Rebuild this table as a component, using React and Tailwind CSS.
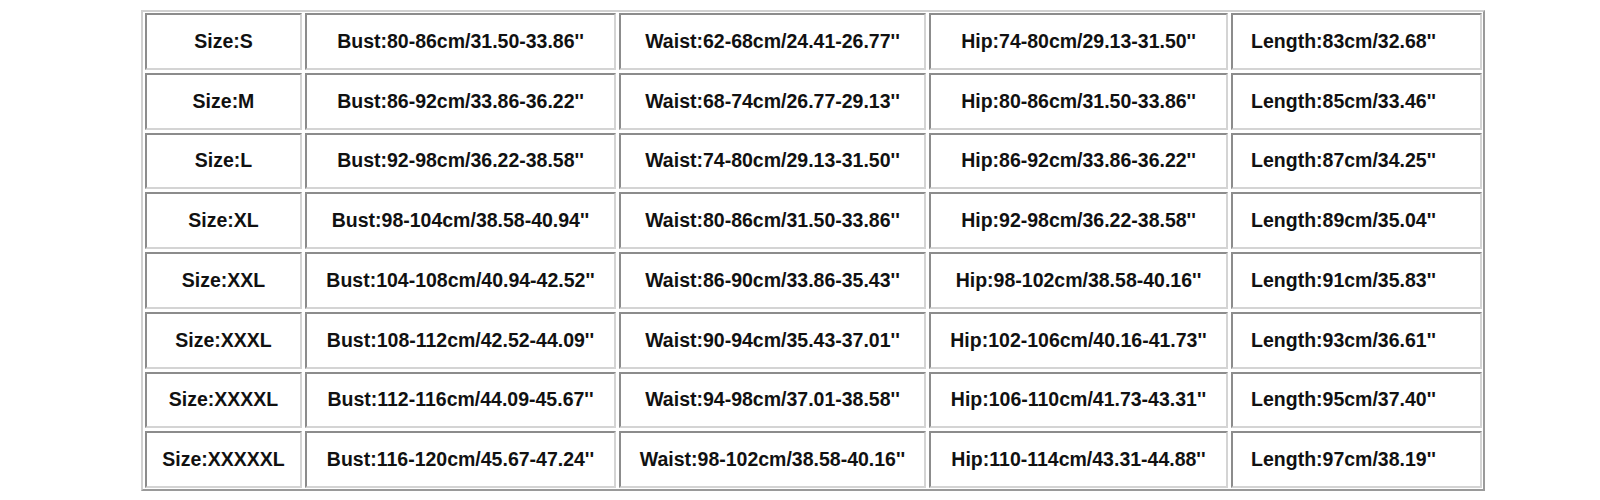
import React from "react";

const rows = [
  ["Size:S", "Bust:80-86cm/31.50-33.86''", "Waist:62-68cm/24.41-26.77''", "Hip:74-80cm/29.13-31.50''", "Length:83cm/32.68''"],
  ["Size:M", "Bust:86-92cm/33.86-36.22''", "Waist:68-74cm/26.77-29.13''", "Hip:80-86cm/31.50-33.86''", "Length:85cm/33.46''"],
  ["Size:L", "Bust:92-98cm/36.22-38.58''", "Waist:74-80cm/29.13-31.50''", "Hip:86-92cm/33.86-36.22''", "Length:87cm/34.25''"],
  ["Size:XL", "Bust:98-104cm/38.58-40.94''", "Waist:80-86cm/31.50-33.86''", "Hip:92-98cm/36.22-38.58''", "Length:89cm/35.04''"],
  ["Size:XXL", "Bust:104-108cm/40.94-42.52''", "Waist:86-90cm/33.86-35.43''", "Hip:98-102cm/38.58-40.16''", "Length:91cm/35.83''"],
  ["Size:XXXL", "Bust:108-112cm/42.52-44.09''", "Waist:90-94cm/35.43-37.01''", "Hip:102-106cm/40.16-41.73''", "Length:93cm/36.61''"],
  ["Size:XXXXL", "Bust:112-116cm/44.09-45.67''", "Waist:94-98cm/37.01-38.58''", "Hip:106-110cm/41.73-43.31''", "Length:95cm/37.40''"],
  ["Size:XXXXXL", "Bust:116-120cm/45.67-47.24''", "Waist:98-102cm/38.58-40.16''", "Hip:110-114cm/43.31-44.88''", "Length:97cm/38.19''"],
];

export default function App() {
  return (
    <div className="w-[1600px] h-[500px] bg-white pt-[10px] pl-[141px] font-['Liberation_Sans',Arial,sans-serif]">
      <div className="inline-block border-2 border-t-[#d0d0d0] border-l-[#d0d0d0] border-b-[#9a9a9a] border-r-[#9a9a9a] pt-px pb-px pl-[2px] pr-px">
        <div className="grid grid-cols-[157px_311px_307px_299px_251px] auto-rows-[56.75px] gap-[3px]">
          {rows.flatMap((r, i) =>
            r.map((c, j) => (
              <div
                key={i + "-" + j}
                className={
                  "flex items-center justify-center border-2 border-t-[#8c8c8c] border-l-[#8c8c8c] border-b-[#d4d4d4] border-r-[#d4d4d4] text-[19.5px] font-bold text-[#111111] whitespace-nowrap" +
                  (j === 4 ? " pr-[26px]" : "")
                }
              >
                {c}
              </div>
            ))
          )}
        </div>
      </div>
    </div>
  );
}
